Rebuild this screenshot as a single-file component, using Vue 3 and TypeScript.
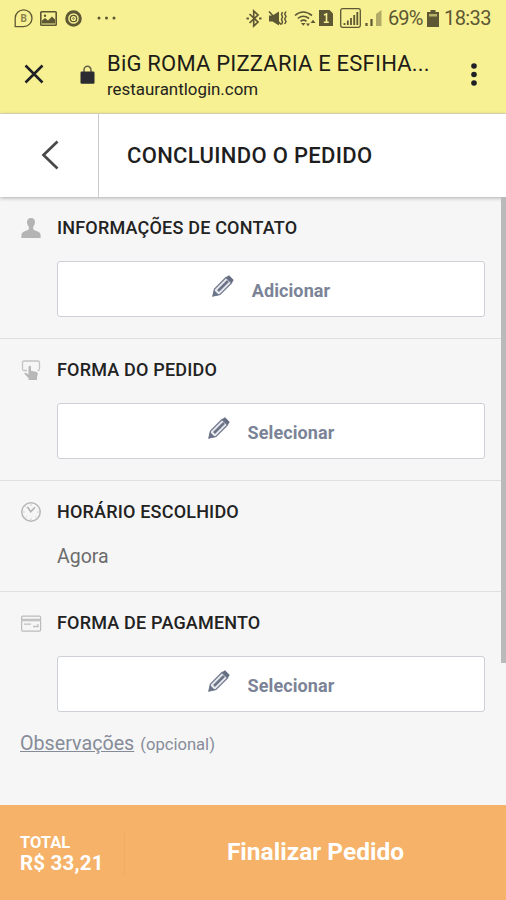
<script setup lang="ts">
interface Section {
  id: string
  title: string
  icon: 'person' | 'tap' | 'clock' | 'card'
  action?: string
  value?: string
}

const sections: Section[] = [
  { id: 'contact', title: 'INFORMAÇÕES DE CONTATO', icon: 'person', action: 'Adicionar' },
  { id: 'method', title: 'FORMA DO PEDIDO', icon: 'tap', action: 'Selecionar' },
  { id: 'schedule', title: 'HORÁRIO ESCOLHIDO', icon: 'clock', value: 'Agora' },
  { id: 'payment', title: 'FORMA DE PAGAMENTO', icon: 'card', action: 'Selecionar' },
]
</script>

<template>
  <div class="screen">
    <header class="browser">
      <div class="status">
        <div class="status-left">
          <svg class="ic-b" width="19" height="19" viewBox="0 0 19 19">
            <path d="M1.2 17.6V9.2a8.4 8.4 0 1 1 8.4 8.4z" fill="none" stroke="currentColor" stroke-width="1.3" />
            <text x="9.6" y="13" text-anchor="middle" class="glyph-b">B</text>
          </svg>
          <svg class="ic-img" width="17" height="15" viewBox="0 0 17 15">
            <rect x="0.8" y="0.8" width="15.4" height="13.4" rx="0.8" fill="none" stroke="currentColor" stroke-width="1.6" />
            <circle cx="5" cy="4.7" r="1.2" fill="currentColor" />
            <path d="M2 12.5V9.5l3-2.5 3 2.5 4-4 3 3v4z" fill="currentColor" />
          </svg>
          <svg class="ic-disc" width="17" height="17" viewBox="0 0 17 17" fill="none" stroke="currentColor">
            <circle cx="8.5" cy="8.5" r="6.8" stroke-width="3" />
            <circle cx="8.5" cy="8.5" r="3.2" stroke-width="1.3" />
            <circle cx="8.5" cy="8.5" r="0.8" stroke-width="0.8" />
          </svg>
          <svg width="19" height="4" viewBox="0 0 19 4" fill="currentColor">
            <circle cx="2" cy="2" r="1.5" /><circle cx="9.5" cy="2" r="1.5" /><circle cx="17" cy="2" r="1.5" />
          </svg>
        </div>
        <div class="status-right">
          <svg class="ic-bt" width="16" height="19" viewBox="0 0 16 19" fill="none" stroke="currentColor">
            <path d="M3.5 5l8.5 8-4.3 4V2L12 6l-8.500 8" stroke-width="1.7" />
            <path d="M0.5 9.5h2.4M13.1 9.5h2.4" stroke-width="1.9" />
          </svg>
          <svg class="ic-mute" width="20" height="17" viewBox="0 0 20 17">
            <path d="M1 5.5h3.5L11 1.5v14l-6.500-4H1z" fill="currentColor" />
            <path d="M1 1.5l12 13" stroke="currentColor" stroke-width="1.6" />
            <path d="M14.500 2l-1 2.500 1 2.500-1 2.500 1 2.500-1 2.500M18 1.500l-1.300 2.500 1.300 2.500-1.300 2.500 1.300 2.500-1.300 2.500" fill="none" stroke="currentColor" stroke-width="1.5" />
          </svg>
          <svg class="ic-wifi" width="22" height="17" viewBox="0 0 22 17" fill="none" stroke="currentColor">
            <path d="M1 5.500q8-7 17 0M3.800 8.500q5.500-4.500 11.200 0M6.500 11.300q3-2.300 6 0" stroke-width="1.6" />
            <path d="M7 13h4.500l-2.200 2.700zM12 13.500h4l-2 2.700zM16.500 13h5l-2.500-3.200z" fill="currentColor" stroke="none" />
          </svg>
          <svg class="ic-sim" width="14" height="16" viewBox="0 0 14 16">
            <path d="M0 0h10.500L14 3.500V16H0z" fill="currentColor" />
            <path d="M5 5l2.500-1v8M4.800 12.200h5" fill="none" stroke="#f7f193" stroke-width="1.6" />
          </svg>
          <svg class="ic-sig" width="21" height="20" viewBox="0 0 21 20">
            <rect x="0.7" y="0.7" width="19.6" height="18.6" rx="1.8" fill="none" stroke="currentColor" stroke-width="1.3" />
            <path d="M4.500 17v-2M7.800 17v-4.500M11 17V10M14.200 17V7M17.300 17V4" stroke="currentColor" stroke-width="1.8" />
          </svg>
          <svg class="ic-sig2" width="17" height="16" viewBox="0 0 17 16">
            <path d="M1.500 16v-3M6.500 16v-7" stroke="currentColor" stroke-width="2.2" />
            <path d="M11 16V4l5.500-4v16z" fill="currentColor" opacity="0.45" />
          </svg>
          <span class="pct">69%</span>
          <svg class="ic-bat" width="12" height="17" viewBox="0 0 12 17">
            <path d="M3.500 0h5v2H12v15H0V2h3.500z" fill="currentColor" />
            <path d="M2 4h8v2.500H2z" fill="#f7f193" opacity="0.6" />
          </svg>
          <span class="time">18:33</span>
        </div>
      </div>
      <div class="tab">
        <svg class="close" width="20" height="20" viewBox="0 0 20 20">
          <path d="M1.500 1.500l17 17M18.500 1.500l-17 17" stroke="#1f2025" stroke-width="2.5" />
        </svg>
        <svg class="lock" width="15" height="19" viewBox="0 0 15 19">
          <path d="M4 8V5a3.500 3.700 0 0 1 7 0v3" fill="none" stroke="#66624a" stroke-width="1.5" />
          <rect x="0.5" y="6.5" width="14" height="12.2" rx="1.2" fill="#2b2c31" />
        </svg>
        <div class="site">
          <div class="site-title">BiG ROMA PIZZARIA E ESFIHA...</div>
          <div class="site-url">restaurantlogin.com</div>
        </div>
        <svg class="more" width="6" height="23" viewBox="0 0 6 23" fill="#1f2025">
          <circle cx="3" cy="3" r="2.8" /><circle cx="3" cy="11.5" r="2.8" /><circle cx="3" cy="20" r="2.8" />
        </svg>
      </div>
    </header>

    <nav class="nav">
      <button class="back" aria-label="Voltar">
        <svg width="18" height="30" viewBox="0 0 18 30">
          <path d="M16.500 1.500L2.500 15l14 13.500" fill="none" stroke="#484848" stroke-width="2.7" />
        </svg>
      </button>
      <h1 class="title"><span>CONCLUINDO O PEDIDO</span></h1>
    </nav>

    <main class="content">
      <section v-for="s in sections" :key="s.id" class="section" :class="s.id">
        <div class="head">
          <svg class="sec-icon" width="22" height="22" viewBox="0 0 22 22">
            <path v-if="s.icon === 'person'" d="M11 1c2.700 0 4.200 1.800 4 4.500-.2 2-1 3.300-1.800 4.200v2.600c1 1.500 7 2 7.300 5.200l.2 3.500H1.300l.2-3.500c.3-3.200 6.300-3.700 7.300-5.200V9.700C8 8.800 7.200 7.500 7 5.500 6.800 2.800 8.300 1 11 1z" fill="#b4b4b4" />
            <template v-else-if="s.icon === 'tap'">
              <path d="M7 11.500H4A1.500 1.500 0 0 1 2.500 10V3.500A1.500 1.500 0 0 1 4 2h14a1.500 1.500 0 0 1 1.500 1.500V10a1.500 1.500 0 0 1-1.500 1.500h-.5" fill="none" stroke="#c4c4c4" stroke-width="1.3" />
              <path d="M8.500 7.500q1.300-1.500 2.500 0v4.200l5.500 1.200q1.500.5 1.300 2l-.8 3.300V21H8.500v-2L4.500 15q-.2-1.500 1.300-1.300l2.700 1.800z" fill="#b8b8b8" />
            </template>
            <template v-else-if="s.icon === 'clock'">
              <circle cx="11" cy="11" r="9.2" fill="none" stroke="#b8b8b8" stroke-width="1.5" />
              <path d="M7.500 6l3.300 4.700 4.200-4.500" fill="none" stroke="#b0b0b0" stroke-width="1.5" />
              <path d="M11 3.200v1.500M11 17.300v1.500M3.200 11h1.500M17.300 11h1.500M5.500 5.500l1 1M16.500 16.500l-1-1M5.500 16.500l1-1" stroke="#c4c4c4" stroke-width="1" />
            </template>
            <template v-else>
              <rect x="1.600" y="4.100" width="19" height="15" rx="1.3" fill="none" stroke="#bcbcbc" stroke-width="1.2" />
              <path d="M2 8h18.500" stroke="#c4c4c4" stroke-width="2.6" />
              <path d="M4 12.200h7M13 14.500h5v-2.500" fill="none" stroke="#bebebe" stroke-width="1.3" />
            </template>
          </svg>
          <h2 class="heading"><span>{{ s.title }}</span></h2>
        </div>
        <button v-if="s.action" class="action">
          <svg class="pencil" width="22" height="22" viewBox="0 0 22 22">
            <path d="M1 21l1.500-7L14 2.500 19.500 8 8 19.500z" fill="#e9eaee" stroke="#747c91" stroke-width="1.3" />
            <path d="M0.500 21.500L2 15l5 5z" fill="#6c7489" />
            <path d="M6 16L16 6" stroke="#6c7489" stroke-width="2.6" />
            <path d="M14 2.200L17 .3l4.700 4.700L19.800 8z" fill="#656d83" />
          </svg>
          <span class="label">{{ s.action }}</span>
        </button>
        <p v-else class="value">{{ s.value }}</p>
      </section>
      <div class="notes"><a class="notes-link">Observações</a><span class="optional">(opcional)</span></div>
      <div class="scrollbar"></div>
    </main>

    <footer class="footer">
      <div class="total">
        <span class="total-label">TOTAL</span>
        <span class="total-value">R$ 33,21</span>
      </div>
      <div class="submit"><span>Finalizar Pedido</span></div>
    </footer>
  </div>
</template>

<style>
body {
  margin: 0;
}
</style>

<style scoped>
.screen {
  width: 506px;
  height: 900px;
  display: flex;
  flex-direction: column;
  overflow: hidden;
  background: #f6f6f6;
  font-family: Roboto, sans-serif;
  color: #222;
}
h1, h2, p {
  margin: 0;
}
button {
  font-family: inherit;
  padding: 0;
}
svg {
  flex: none;
  display: block;
}
.browser {
  flex: none;
  background: #f7f193;
  border-bottom: 1px solid #e3dcc0;
  box-sizing: border-box;
  height: 114px;
}
.status {
  height: 36px;
  display: flex;
  justify-content: space-between;
  align-items: center;
  box-sizing: border-box;
  padding: 0 15px 0 14px;
  color: #5d5734;
}
.status-left, .status-right {
  display: flex;
  align-items: center;
}
.status-left {
  gap: 7px;
}
.ic-disc {
  margin: 0 8px 0 1px;
}
.glyph-b {
  font: 700 10px Roboto, sans-serif;
  fill: #8a8350;
}
.ic-mute { margin-left: 6px; }
.ic-wifi { margin-left: 6px; }
.ic-sim { margin-left: 3px; }
.ic-sig { margin-left: 7px; }
.ic-sig2 { margin-left: 4px; }
.pct {
  margin-left: 6px;
  width: 34px;
  font-size: 20px;
  letter-spacing: -0.9px;
  white-space: nowrap;
}
.ic-bat { margin-left: 5px; }
.time {
  margin-left: 5px;
  width: 47px;
  font-size: 20px;
  letter-spacing: -0.6px;
  white-space: nowrap;
}
.tab {
  height: 76px;
  display: flex;
  align-items: center;
  padding: 0 29px 0 24px;
}
.lock {
  margin-left: 36px;
}
.site {
  margin-left: 12px;
  padding-top: 1px;
  flex: 1;
  white-space: nowrap;
}
.site-title {
  font-size: 22px;
  line-height: 28px;
  letter-spacing: 0.2px;
  color: #1d1c18;
}
.site-url {
  font-size: 16.9px;
  line-height: 22px;
  color: #24231c;
}
.nav {
  height: 83px;
  flex: none;
  display: flex;
  background: #fff;
  position: relative;
  box-shadow: 0 1px 4px rgba(0, 0, 0, 0.3);
}
.back {
  width: 99px;
  box-sizing: border-box;
  border: 0;
  border-right: 1px solid #ccc;
  background: #fff;
  padding: 0 0 2px 1px;
  display: flex;
  align-items: center;
  justify-content: center;
}
.title {
  display: flex;
  align-items: center;
  padding-left: 28px;
  font-size: 22px;
  font-weight: 500;
  letter-spacing: 0.32px;
  color: #1e1e1e;
}
.content {
  position: relative;
  flex: 1;
}
.section {
  box-sizing: border-box;
  height: 142px;
  border-bottom: 1px solid #dfdfdf;
  padding: 20px 21px 0 20px;
}
.section.schedule {
  height: 111px;
}
.section.payment {
  height: 140px;
  border-bottom: 0;
}
.head {
  display: flex;
  align-items: center;
  height: 22px;
  gap: 15px;
}
.heading {
  font-size: 18px;
  line-height: 22px;
  font-weight: 500;
  letter-spacing: 0.19px;
  color: #222;
  white-space: nowrap;
}
.action {
  display: flex;
  justify-content: center;
  align-items: center;
  box-sizing: border-box;
  width: 428px;
  height: 56px;
  margin: 22px 0 0 37px;
  border: 1px solid #cdd0d6;
  border-radius: 3px;
  background: #fff;
}
.pencil {
  margin: -6px 18px 0 0;
}
.label {
  margin-top: 3px;
  font-size: 18px;
  font-weight: 700;
  letter-spacing: 0.1px;
  color: #7b8397;
}
.value {
  margin: 22px 0 0 37px;
  font-size: 19.5px;
  line-height: 24px;
  letter-spacing: 0;
  color: #6c6c6c;
}
.notes {
  display: flex;
  align-items: baseline;
  gap: 6px;
  padding: 0 20px;
  color: #868c99;
}
.notes-link {
  font-size: 19.7px;
  line-height: 24px;
  text-decoration: underline;
}
.optional {
  font-size: 16.6px;
}
.scrollbar {
  position: absolute;
  right: 0;
  top: 0;
  width: 5px;
  height: 466px;
  background: #bababa;
}
.footer {
  height: 95px;
  flex: none;
  display: flex;
  align-items: center;
  background: #f5b268;
  color: #fff;
  font-weight: 700;
}
.total {
  width: 104px;
  height: 44px;
  padding-left: 20px;
  border-right: 1px solid #efac64;
  display: flex;
  flex-direction: column;
  justify-content: center;
}
.total-label {
  font-size: 16.5px;
  line-height: 20px;
}
.total-value {
  font-size: 20.5px;
  line-height: 20px;
  letter-spacing: 0.2px;
}
.submit {
  flex: 1;
  text-align: center;
  font-size: 24.5px;
  line-height: 28px;
  padding-bottom: 2px;
}
</style>
